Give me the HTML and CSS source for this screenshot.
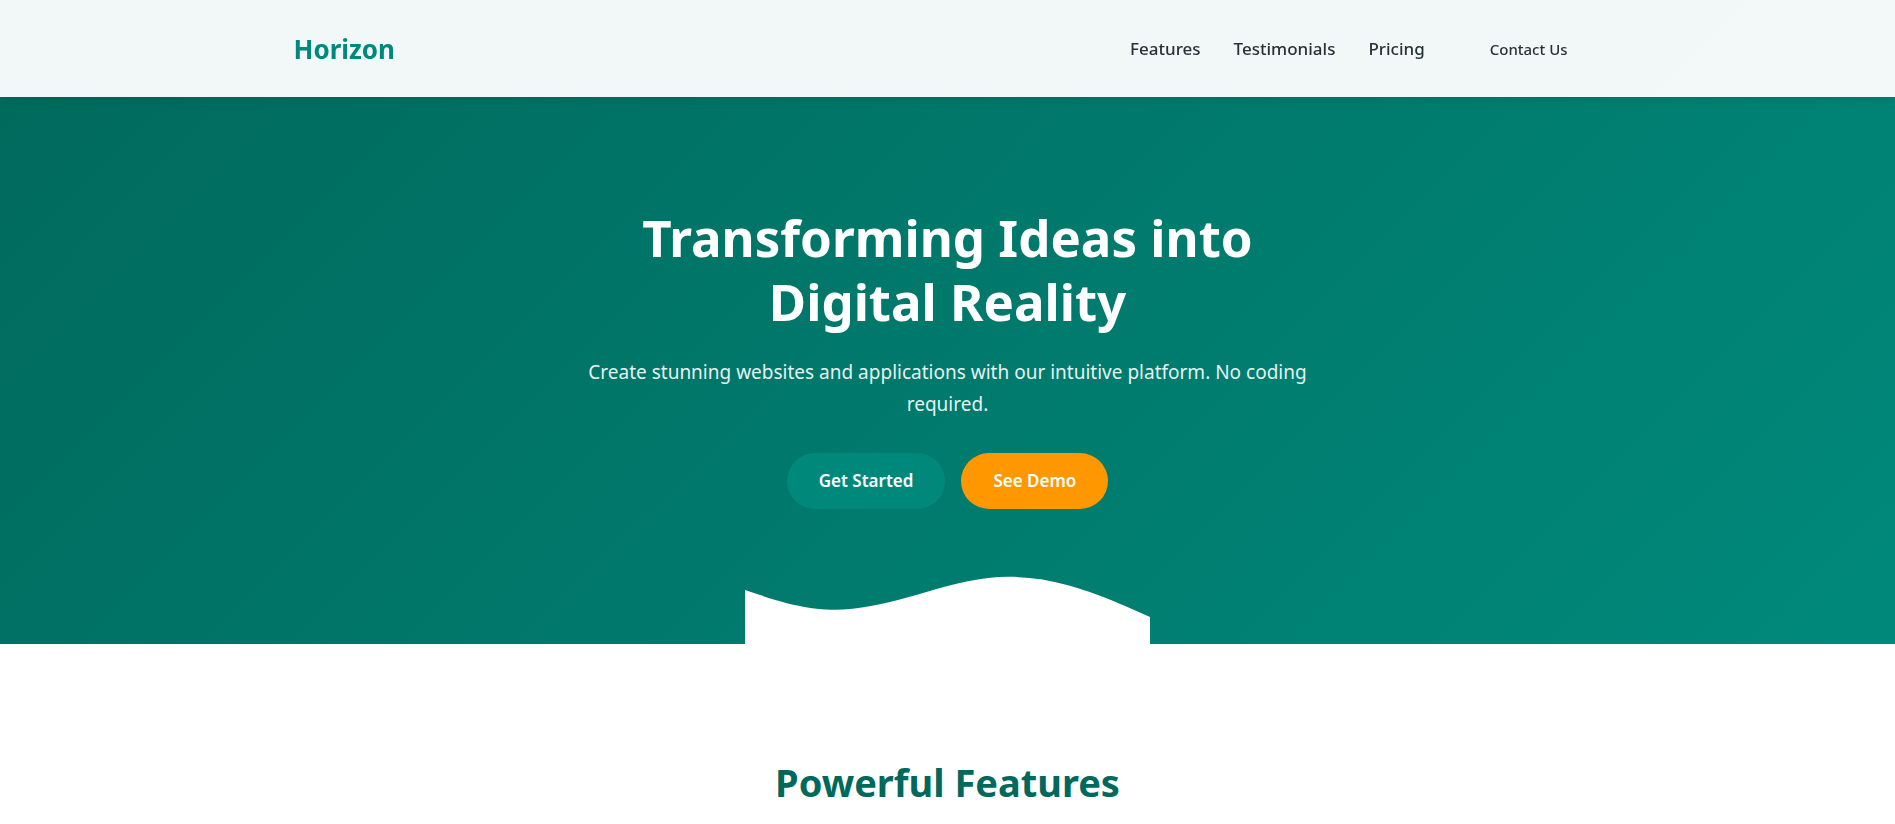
FILE: index.html
```html
<!DOCTYPE html>
<html lang="en">
<head>
<meta charset="utf-8">
<meta name="viewport" content="width=device-width, initial-scale=1">
<title>Horizon</title>
<link rel="stylesheet" href="styles.css">
</head>
<body>
<header class="site-header">
  <div class="header-inner">
    <a class="logo" href="#top">Horizon</a>
    <nav class="site-nav">
      <a class="nav-link" href="#features">Features</a>
      <a class="nav-link" href="#testimonials">Testimonials</a>
      <a class="nav-link" href="#pricing">Pricing</a>
      <button class="contact" type="button">Contact Us</button>
    </nav>
  </div>
</header>
<main>
  <section class="hero" id="top">
    <div class="hero-content">
      <h1 class="hero-title">Transforming Ideas into Digital Reality</h1>
      <p class="hero-text">Create stunning websites and applications with our intuitive platform. No coding required.</p>
      <div class="hero-actions">
        <button class="btn btn-primary" type="button">Get Started</button>
        <button class="btn btn-accent" type="button">See Demo</button>
      </div>
    </div>
    <svg class="wave" viewBox="0 0 1440 320" aria-hidden="true"><path fill="#fff" d="M0,128L48,144C96,160,192,192,288,197.3C384,203,480,181,576,154.7C672,128,768,96,864,85.3C960,75,1056,85,1152,112C1248,139,1344,181,1392,202.7L1440,224L1440,320L0,320Z"/></svg>
  </section>
  <section class="features" id="features">
    <h2 class="section-title">Powerful Features</h2>
  </section>
</main>
</body>
</html>
```
FILE: styles.css
```css
* {
  box-sizing: border-box;
  margin: 0;
  padding: 0;
}

body {
  font-family: "Segoe UI", "Noto Sans", "Open Sans", sans-serif;
  line-height: 1.6;
  color: #263238;
  background: #fff;
}

.site-header {
  position: fixed;
  top: 0;
  left: 0;
  right: 0;
  z-index: 10;
  background: rgba(255, 255, 255, 0.95);
  box-shadow: 0 2px 10px rgba(0, 0, 0, 0.1);
}

.header-inner {
  display: flex;
  justify-content: space-between;
  align-items: center;
  max-width: 1400px;
  min-height: 97px;
  margin: 0 auto;
  padding: 0 48px 0 46px;
}

.logo {
  font-size: 26px;
  font-weight: 700;
  line-height: 44px;
  color: #00897b;
  text-decoration: none;
}

.site-nav {
  display: flex;
  align-items: center;
  gap: 33px;
}

.nav-link {
  font-size: 17px;
  font-weight: 500;
  color: #263238;
  text-decoration: none;
}

.contact {
  padding: 12px 32px;
  border: 0;
  border-radius: 50px;
  background: transparent;
  font: 500 15px/24px "Segoe UI", "Noto Sans", "Open Sans", sans-serif;
  color: #263238;
}

.hero {
  position: relative;
  padding: 205px 48px 135px;
  background: linear-gradient(135deg, #00695c 0%, #00897b 100%);
  text-align: center;
  color: #fff;
}

.hero-content {
  max-width: 740px;
  margin: 0 auto;
}

.hero-title {
  margin-bottom: 23px;
  font-size: 51px;
  font-weight: 700;
  line-height: 64px;
}

.hero-text {
  margin-bottom: 33px;
  font-size: 19px;
  line-height: 32px;
  opacity: 0.9;
}

.hero-actions {
  display: flex;
  justify-content: center;
  gap: 16px;
}

.btn {
  padding: 15px 32px;
  border: 0;
  border-radius: 28px;
  font: 600 17px/26px "Segoe UI", "Noto Sans", "Open Sans", sans-serif;
  color: #fff;
}

.btn-primary {
  background: #00897b;
}

.btn-accent {
  background: #ff9800;
}

.wave {
  position: absolute;
  bottom: 0;
  left: 0;
  display: block;
  width: 100%;
  height: 90px;
}

.features {
  padding: 106px 48px 0;
}

.section-title {
  font-size: 38px;
  font-weight: 700;
  line-height: 64px;
  text-align: center;
  color: #00695c;
}
```
